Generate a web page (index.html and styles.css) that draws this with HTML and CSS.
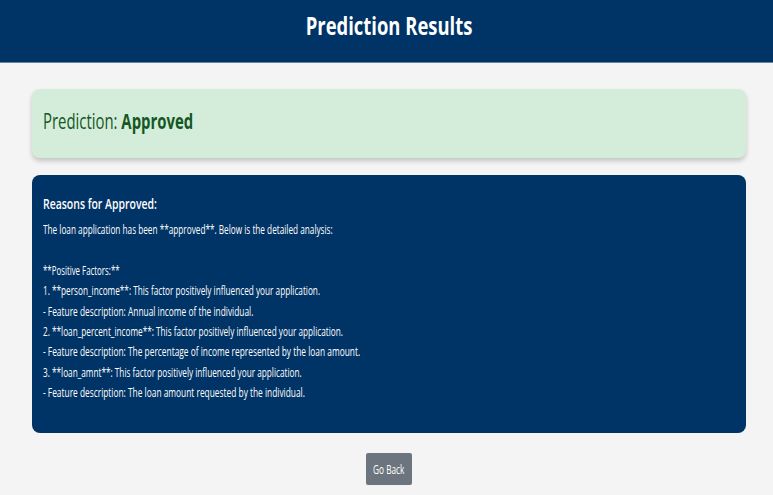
FILE: index.html
```
<!DOCTYPE html>
<html lang="en">
<head>
<meta charset="utf-8">
<title>Prediction Results</title>
<link rel="stylesheet" href="styles.css">
</head>
<body>
<header class="header"><h1 class="title">Prediction Results</h1></header>
<main class="content">
<section class="result"><h2 class="verdict">Prediction: <strong>Approved</strong></h2></section>
<section class="reasons">
<h3 class="reasons-title">Reasons for Approved:</h3>
<div class="lines">
<p><span class="marked">The loan application has been **approved**. Below is the detailed analysis:</span></p>
<p></p>
<p><span class="heading">**Positive Factors:**</span></p>
<p><span class="marked">1. **person_income**: This factor positively influenced your application.</span></p>
<p><span>- Feature description: Annual income of the individual.</span></p>
<p><span class="marked">2. **loan_percent_income**: This factor positively influenced your application.</span></p>
<p><span>- Feature description: The percentage of income represented by the loan amount.</span></p>
<p><span class="marked">3. **loan_amnt**: This factor positively influenced your application.</span></p>
<p><span>- Feature description: The loan amount requested by the individual.</span></p>
</div>
</section>
<a class="back" href="#"><span>Go Back</span></a>
</main>
</body>
</html>
```
FILE: styles.css
```
* { box-sizing: border-box; }
body {
  margin: 0;
  height: 495px;
  overflow: hidden;
  background: #f4f4f4;
  font-family: "Open Sans", "Noto Sans", sans-serif;
}
h1, h2, h3, p { margin: 0; white-space: nowrap; }
.header {
  height: 63px;
  padding-top: 8px;
  background: #003366;
  border-bottom: 1px solid #6685a3;
  display: flex;
  justify-content: center;
}
.title {
  color: #fff;
  font-size: 25px;
  line-height: 34px;
  font-weight: 700;
  transform: translateX(3px) scaleX(0.737);
}
.content {
  padding: 26px 27px 0 32px;
  display: flex;
  flex-direction: column;
}
.result {
  height: 69px;
  padding: 16px 11px;
  border-radius: 8px;
  background: #d4edda;
  box-shadow: 0 3px 5px rgba(0, 0, 0, 0.2);
}
.verdict {
  color: #155724;
  font-size: 22px;
  line-height: 30px;
  font-weight: 450;
  width: max-content;
  transform: scaleX(0.677);
  transform-origin: left;
}
.verdict strong { font-weight: 700; }
.reasons {
  height: 258px;
  margin-top: 17px;
  padding: 17px 11px;
  border-radius: 8px;
  background: #003366;
  color: #fff;
}
.reasons-title {
  font-size: 15px;
  line-height: 22px;
  font-weight: 600;
  width: max-content;
  transform: scaleX(0.697);
  transform-origin: left;
}
.lines { padding-top: 6px; font-size: 12.5px; }
.lines p { height: 20.4px; line-height: 20.4px; }
.lines span {
  display: inline-block;
  transform: scaleX(0.669);
  transform-origin: left;
}
.lines .marked { transform: scaleX(0.658); }
.lines .heading { transform: scaleX(0.63); }
.back {
  align-self: center;
  width: 46px;
  height: 32px;
  margin-top: 20px;
  display: flex;
  justify-content: center;
  border-radius: 2px;
  background: #6c757d;
  color: #fff;
  font-size: 12.5px;
  line-height: 33px;
  text-decoration: none;
  white-space: nowrap;
}
.back span { transform: scaleX(0.66); }
```
